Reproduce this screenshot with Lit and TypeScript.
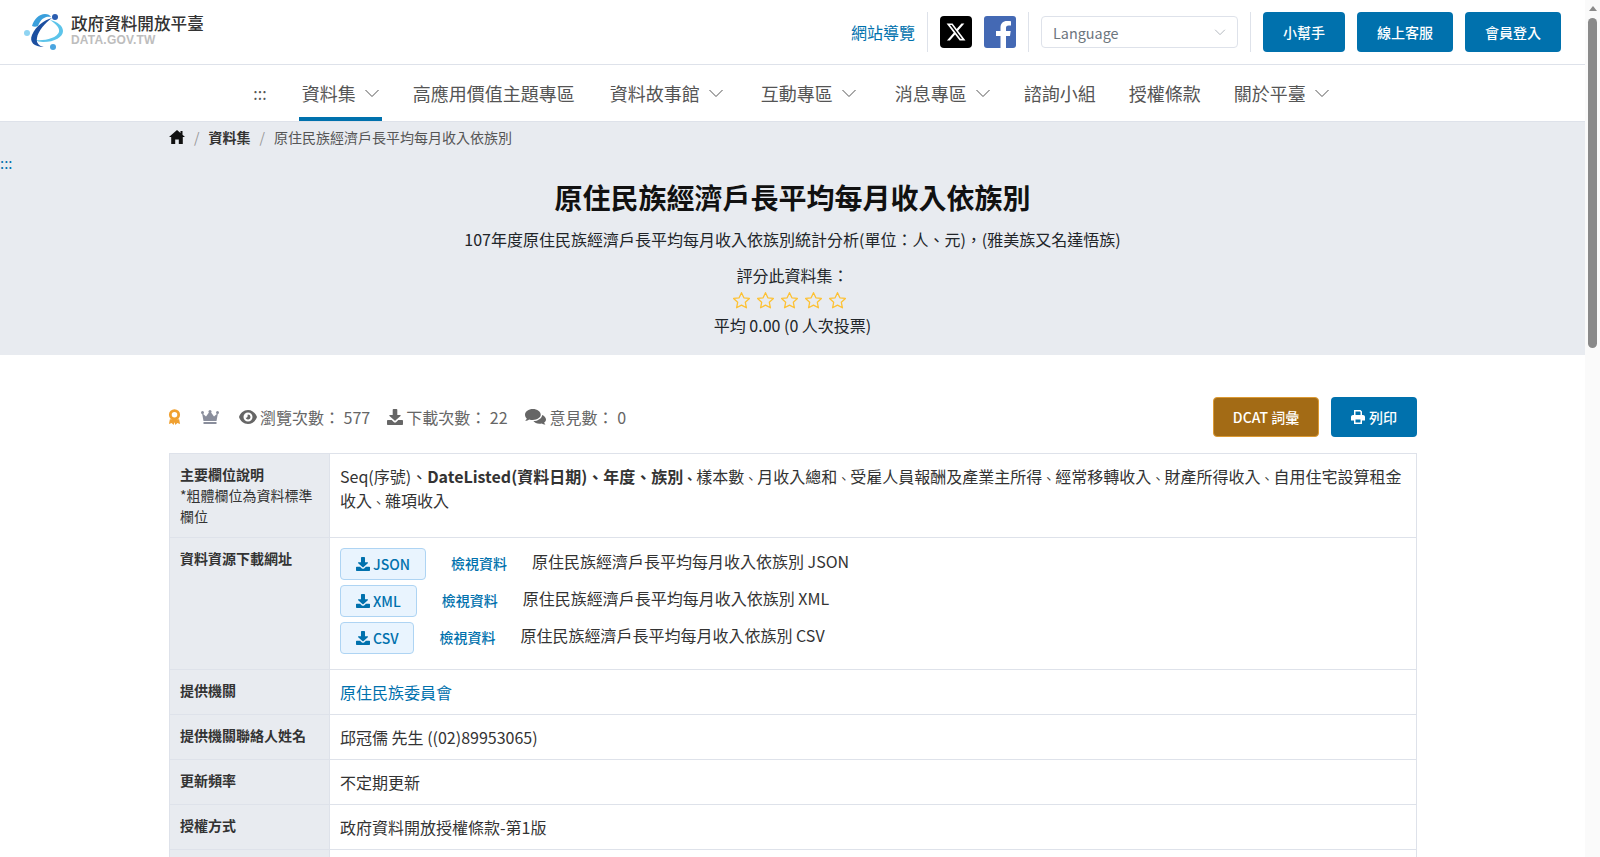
import { LitElement, html, css, svg } from 'lit';
import { customElement } from 'lit/decorators.js';

const chevron = html`<svg class="chev" viewBox="0 0 16 16" width="16" height="16"><path d="M1.5 5l6.5 6.5L14.5 5" fill="none" stroke="currentColor" stroke-width="1"/></svg>`;
const dl = svg`<path d="M6.5 0h3c.4 0 .8.3.8.8V6h2.700c.6 0 .9.7.5 1.100L8.400 11.600a.6.6 0 0 1-.8 0L2.500 7.100C2.100 6.700 2.400 6 3 6h2.700V.8c0-.5.4-.8.8-.8zM16 11.800v3.400c0 .4-.3.800-.8.800H.8a.8.8 0 0 1-.8-.8v-3.400c0-.4.3-.8.8-.8h3.900l2 2c.7.7 1.900.7 2.600 0l2-2h3.900c.5 0 .8.4.8.8z"/>`;
const dlIcon = html`<svg class="ico" viewBox="0 0 16 16" width="14" height="14" fill="currentColor">${dl}</svg>`;

const star = html`<svg viewBox="2 2 20 20" width="17" height="17"><path d="M12 2.800l2.800 6 6.500.8-4.800 4.500 1.300 6.500L12 17.400l-5.800 3.200 1.300-6.500-4.800-4.500 6.500-.8z" fill="none" stroke="#fdc133" stroke-width="1.500" stroke-linejoin="round"/></svg>`;

const comma = html`<span class="c">、</span>`;

const resources = [
  { fmt: 'JSON', name: '原住民族經濟戶長平均每月收入依族別 JSON' },
  { fmt: 'XML', name: '原住民族經濟戶長平均每月收入依族別 XML' },
  { fmt: 'CSV', name: '原住民族經濟戶長平均每月收入依族別 CSV' },
];

@customElement('app-root')
export class AppRoot extends LitElement {
  static styles = css`
    :host {
      display: flex;
      height: 100vh;
      overflow: hidden;
      font-family: "Noto Sans CJK TC", "Noto Sans", sans-serif;
      color: #212529;
      font-size: 16px;
      background: #fff;
    }
    a { color: inherit; text-decoration: none; }
    .page { flex: 1; min-width: 0; overflow: hidden; }
    .scrollbar {
      width: 15px;
      flex: none;
      background: #fafafa;
      display: flex;
      flex-direction: column;
      align-items: center;
    }
    .scrollbar .arrow {
      margin-top: 6px;
      width: 0;
      height: 0;
      border-left: 4.500px solid transparent;
      border-right: 4.500px solid transparent;
      border-bottom: 5px solid #8a8a8a;
    }
    .scrollbar .thumb {
      margin-top: 7px;
      width: 9px;
      height: 330px;
      border-radius: 5px;
      background: #8a8a8a;
    }
    .top {
      height: 64px;
      display: flex;
      align-items: center;
      padding: 0 24px;
      border-bottom: 1px solid #dee2ea;
    }
    .logo { display: flex; align-items: center; gap: 7px; }
    .logo-text { display: flex; flex-direction: column; margin-bottom: 5px; }
    .logo-zh { font-size: 16.600px; line-height: 20px; color: #333; font-weight: 500; }
    .logo-en { font-family: "Liberation Sans", sans-serif; font-weight: 700; font-size: 12px; line-height: 12px; margin-top: 1px; color: #bdbdbd; letter-spacing: 0.2px; }
    .top-right { margin-left: auto; display: flex; align-items: center; }
    .sitemap { color: #0071ad; font-size: 16px; margin-right: 12px; }
    .sep { width: 1px; height: 40px; background: #dee2ea; }
    .social { display: flex; gap: 12px; padding: 0 12px; }
    .select {
      box-sizing: border-box;
      width: 197px;
      height: 32px;
      margin: 0 12px;
      border: 1px solid #dee2ea;
      border-radius: 4px;
      display: flex;
      align-items: center;
      justify-content: space-between;
      padding: 0 11px;
      font-size: 14.400px;
      color: #6c757d;
    }
    .select .chev { width: 12px; height: 12px; color: #9aa0a8; }
    .btn-group { display: flex; gap: 12px; margin-left: 12px; }
    .btn {
      height: 40px;
      box-sizing: border-box;
      padding: 0 20px;
      background: #0071ad;
      color: #fff;
      border-radius: 4px;
      font-size: 14px;
      font-weight: 500;
      display: flex;
      align-items: center;
      justify-content: center;
    }
    nav {
      height: 56px;
      display: flex;
      align-items: center;
      justify-content: center;
      border-bottom: 1px solid #dee2ea;
      color: #555;
      font-size: 18px;
      padding-left: 14px;
    }
    .nav-item {
      height: 100%;
      box-sizing: border-box;
      display: flex;
      align-items: center;
      gap: 8px;
      padding: 4px 2px 0 3px;
      margin: 0 14px;
      border-bottom: 4px solid transparent;
    }
    .nav-item.active { border-bottom-color: #0071ad; }
    .nav-item.mid { margin-right: 16px; }
    .nav-item.wide { margin-right: 18px; }
    .nav-item.wider { margin-right: 19px; }
    .nav-item .chev { color: #555; }
    .dots { font-size: 16px; color: #555; margin-right: 18px; }
    .hero {
      background: #e8ebf0;
      height: 233px;
      box-sizing: border-box;
      position: relative;
      text-align: center;
    }
    .crumbs {
      display: flex;
      align-items: center;
      gap: 9px;
      padding: 5px 0 0 169px;
      height: 20px;
      font-size: 14px;
      line-height: 20px;
      color: #555;
    }
    .crumbs b { color: #333; font-weight: 700; }
    .crumbs i { font-style: normal; color: #999; }
    .hero-dots { position: absolute; left: 0; top: 33px; color: #0071ad; font-size: 15px; line-height: 16px; }
    h1 { margin: 30px 0 0; font-size: 28px; line-height: 40px; font-weight: 700; color: #111; }
    .sub { margin-top: 10px; font-size: 16px; line-height: 24px; color: #212529; }
    .rate { margin-top: 12px; line-height: 24px; }
    .stars { display: flex; justify-content: center; gap: 7px; margin: 2px 0 2px; padding-right: 6px; height: 22px; align-items: center; }
    .avg { line-height: 24px; }
    main { padding: 42px 168px 0 169px; }
    .stats {
      display: flex;
      align-items: center;
      color: #666;
      font-size: 16px;
      height: 40px;
      margin-left: -1px;
    }
    .stat { display: flex; align-items: center; gap: 3px; margin-right: 17px; }
    .stat svg { flex: none; }
    .stat.badge { margin-right: 20px; }
    .stat.talk { gap: 4px; }
    .stats-right { margin-left: auto; display: flex; gap: 12px; }
    .btn.dcat { background: #a36b15; border: 1px solid #dc9a33; width: 106px; padding: 0; }
    .btn.print { width: 86px; padding: 0; gap: 4px; }
    table { width: 100%; border-collapse: collapse; margin-top: 16px; table-layout: fixed; }
    td, th { border: 1px solid #dee2ea; vertical-align: top; padding: 10px; text-align: left; }
    th { width: 139px; background: #e8ebf0; font-size: 14px; line-height: 21px; font-weight: 700; color: #333; }
    th span { display: block; font-weight: 400; }
    td { font-size: 16px; line-height: 24px; color: #333; }
    td b { font-weight: 700; }
    .c { font-size: 13px; line-height: 0; }
    .link { color: #0071ad; }
    .res { display: flex; align-items: flex-start; }
    .fmt {
      box-sizing: border-box;
      height: 32px;
      display: flex;
      align-items: center;
      gap: 3px;
      padding: 0 15px;
      border: 1px solid #aed4f3;
      background: #e9f4fe;
      border-radius: 4px;
      color: #0071ad;
      font-size: 14px;
      font-weight: 500;
      margin-bottom: 5px;
    }
    .view { color: #0071ad; font-size: 14px; font-weight: 500; margin: 2px 25px 0; line-height: 26px; }
    .res-name { line-height: 24px; margin-top: 1px; }
    .last th { height: 40px; }
  `;

  render() {
    return html`
      <div class="page">
        <header class="top">
          <a class="logo" href="#">
            <svg width="40" height="36" viewBox="0 0 40 36">
              <path d="M26 6c8 2 13 6 13 11 0 6-8 11-20 11-3 0-6-1-8-2 10 1 22-2 24-8 1-4-3-8-9-12z" fill="#5cc4ea"/>
              <path d="M8 12C10 5 15 0 21 0c3 0 5 1 6 3-5-1-10 1-13 9-2 1-4 1-6 0z" fill="#3a9fdc"/>
              <path d="M28 4C20 6 12 12 8 21c-3 7 2 12 12 12-5-1-8-4-7-9C14 17 21 9 28 4z" fill="#1c4fa0"/>
              <circle cx="31" cy="3" r="3" fill="#2a5db0"/>
              <circle cx="3" cy="19" r="3" fill="#8fd4f2"/>
              <circle cx="29" cy="33" r="3" fill="#4aa5e0"/>
            </svg>
            <span class="logo-text">
              <span class="logo-zh">政府資料開放平臺</span>
              <span class="logo-en">DATA.GOV.TW</span>
            </span>
          </a>
          <div class="top-right">
            <a class="sitemap" href="#">網站導覽</a>
            <span class="sep"></span>
            <div class="social">
              <svg width="32" height="32" viewBox="0 0 32 32"><rect width="32" height="32" rx="4" fill="#000"/><path transform="translate(5.500 5.500) scale(.875)" fill="#fff" d="M18.244 2.250h3.308l-7.227 8.260 8.502 11.240H16.170l-5.214-6.817L4.990 21.750H1.680l7.730-8.835L1.254 2.250H8.080l4.713 6.231zm-1.161 17.520h1.833L7.084 4.126H5.117z"/></svg>
              <svg width="32" height="32" viewBox="0 0 32 32"><rect width="32" height="32" rx="3" fill="#4469b4"/><path d="M22 32V20h4l.700-5H22v-3c0-1.500.700-2.500 2.600-2.500H27V5.200C26 5 24.500 4.900 23 4.900c-4 0-6.500 2.400-6.500 6.700V15H12v5h4.500v12z" fill="#fff"/></svg>
            </div>
            <span class="sep"></span>
            <div class="select"><span>Language</span>${chevron}</div>
            <span class="sep"></span>
            <div class="btn-group">
              <a class="btn" href="#">小幫手</a>
              <a class="btn" href="#">線上客服</a>
              <a class="btn" href="#">會員登入</a>
            </div>
          </div>
        </header>
        <nav>
          <span class="dots">:::</span>
          <a class="nav-item active" href="#">資料集 ${chevron}</a>
          <a class="nav-item mid" href="#">高應用價值主題專區</a>
          <a class="nav-item wide" href="#">資料故事館 ${chevron}</a>
          <a class="nav-item wider" href="#">互動專區 ${chevron}</a>
          <a class="nav-item" href="#">消息專區 ${chevron}</a>
          <a class="nav-item" href="#">諮詢小組</a>
          <a class="nav-item" href="#">授權條款</a>
          <a class="nav-item" href="#">關於平臺 ${chevron}</a>
        </nav>
        <section class="hero">
          <div class="crumbs">
            <svg width="16" height="14" viewBox="0 0 16 14" fill="#111"><path d="M8 0 0 7h2.200v7h4V9.500h3.600V14h4V7H16l-2.500-2.200V1h-2v2L8 0z"/></svg>
            <i>/</i><b>資料集</b><i>/</i><span>原住民族經濟戶長平均每月收入依族別</span>
          </div>
          <a class="hero-dots" href="#">:::</a>
          <h1>原住民族經濟戶長平均每月收入依族別</h1>
          <div class="sub">107年度原住民族經濟戶長平均每月收入依族別統計分析(單位：人、元)，(雅美族又名達悟族)</div>
          <div class="rate">評分此資料集：</div>
          <div class="stars">${star}${star}${star}${star}${star}</div>
          <div class="avg">平均 0.00 (0 人次投票)</div>
        </section>
        <main>
          <div class="stats">
            <span class="stat badge">
              <svg width="13" height="17" viewBox="0 0 14 18"><circle cx="7" cy="6" r="4.500" fill="none" stroke="#f0a030" stroke-width="3"/><path d="M2 11l-1 5 3-1 2 2 1-3 1 3 2-2 3 1-1-5z" fill="#f0a030"/></svg>
            </span>
            <span class="stat badge">
              <svg width="18" height="14" viewBox="0 0 18 14" fill="#8a8e9c"><circle cx="1.500" cy="2.500" r="1.500"/><circle cx="9" cy="1.500" r="1.500"/><circle cx="16.500" cy="2.500" r="1.500"/><path d="M1 3l4 3.500L9 1l4 5.500L17 3l-1.500 8h-13zM2.500 12h13v2h-13z"/></svg>
            </span>
            <span class="stat">
              <svg width="18" height="14" viewBox="0 0 18 14"><path fill="#666" fill-rule="evenodd" d="M9 0c4.300 0 7.700 3.200 9 7-1.300 3.800-4.700 7-9 7s-7.700-3.200-9-7C1.300 3.200 4.700 0 9 0zm0 2.500a4.500 4.500 0 1 0 0 9 4.500 4.500 0 0 0 0-9zm0 2a2.500 2.500 0 1 1-2.400 3.200c1 .3 2.300-.7 2-2.200-.1-.4 0-1 .4-1z"/></svg>
              瀏覽次數： 577
            </span>
            <span class="stat">
              <svg width="16" height="16" viewBox="0 0 16 16" fill="#666">${dl}</svg>
              下載次數： 22
            </span>
            <span class="stat talk">
              <svg width="21" height="16" viewBox="0 0 20 16" preserveAspectRatio="none" fill="#666"><path d="M7.500 0C3.400 0 0 2.500 0 5.800c0 1.400.6 2.700 1.700 3.700-.3 1-1.100 1.800-1.500 2.300 1.500 0 2.900-.7 3.800-1.400 1.100.4 2.300.6 3.500.6 4.100 0 7.500-2.500 7.500-5.200C15 2.500 11.600 0 7.500 0z"/><path d="M20 10.500c0-2-1.500-3.700-3.600-4.600-.5 3.500-4 6-8.400 6.200 1 1.600 3.200 2.700 5.700 2.700.8 0 1.700-.1 2.400-.4.8.6 2 1.100 3.400 1.200-.4-.4-1-1.200-1.300-2 1.100-.8 1.800-1.900 1.800-3.100z"/></svg>
              意見數： 0
            </span>
            <div class="stats-right">
              <a class="btn dcat" href="#">DCAT 詞彙</a>
              <a class="btn print" href="#">
                <svg width="14" height="14" viewBox="0 0 14 14" fill="#fff"><path fill-rule="evenodd" d="M3 0h6.500L11 1.500V5h1c1.100 0 2 .9 2 2v3.500h-3V14H3v-3.500H0V7c0-1.100.9-2 2-2h1zm1.500 1.500V5h5V2.100l-.6-.6zm0 8V12.500h5V9.500z"/></svg>
                列印
              </a>
            </div>
          </div>
          <table>
            <tr>
              <th>主要欄位說明<span>*粗體欄位為資料標準欄位</span></th>
              <td>Seq(序號)、<b>DateListed(資料日期)、年度、族別${comma}</b>樣本數${comma}月收入總和${comma}受雇人員報酬及產業主所得${comma}經常移轉收入${comma}財產所得收入${comma}自用住宅設算租金收入${comma}雜項收入</td>
            </tr>
            <tr>
              <th>資料資源下載網址</th>
              <td>
                ${resources.map(r => html`
                  <div class="res">
                    <a class="fmt" href="#">${dlIcon} ${r.fmt}</a>
                    <a class="view" href="#">檢視資料</a>
                    <span class="res-name">${r.name}</span>
                  </div>`)}
              </td>
            </tr>
            <tr><th>提供機關</th><td><a class="link" href="#">原住民族委員會</a></td></tr>
            <tr><th>提供機關聯絡人姓名</th><td>邱冠儒 先生 ((02)89953065)</td></tr>
            <tr><th>更新頻率</th><td>不定期更新</td></tr>
            <tr><th>授權方式</th><td>政府資料開放授權條款-第1版</td></tr>
            <tr class="last"><th></th><td></td></tr>
          </table>
        </main>
      </div>
      <div class="scrollbar"><span class="arrow"></span><span class="thumb"></span></div>
    `;
  }
}
